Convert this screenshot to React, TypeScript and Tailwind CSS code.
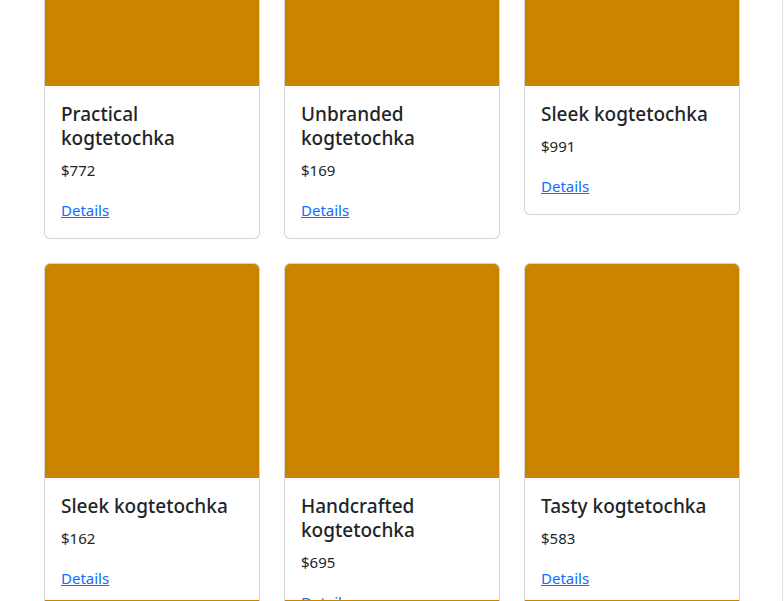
import React from "react";

type Item = { name: string; price: number };

const items: Item[] = [
  { name: "Practical kogtetochka", price: 772 },
  { name: "Unbranded kogtetochka", price: 169 },
  { name: "Sleek kogtetochka", price: 991 },
  { name: "Sleek kogtetochka", price: 162 },
  { name: "Handcrafted kogtetochka", price: 695 },
  { name: "Tasty kogtetochka", price: 583 },
];

function Card({ item }: { item: Item }) {
  return (
    <div className="flex flex-col self-start overflow-hidden rounded-[6px] border border-[rgba(0,0,0,0.175)] bg-white">
      <div className="h-[214px] w-full bg-[#cc8400]" />
      <div className="p-4">
        <h5 className="mb-2 text-[19px] font-medium leading-[24px] text-[#212529]">{item.name}</h5>
        <p className="mb-4 text-[15px] leading-[24px] text-[#212529]">${item.price}</p>
        <a href="#" className="text-[15px] leading-[24px] text-[#0d6efd] underline">
          Details
        </a>
      </div>
    </div>
  );
}

export default function App() {
  return (
    <div
      className="relative h-[601px] w-[784px] overflow-hidden bg-white"
      style={{ fontFamily: '"Noto Sans", "Open Sans", sans-serif' }}
    >
      <div className="ml-[44px] mt-[-129px] grid grid-cols-[216px_216px_216px] gap-x-[24px] gap-y-[24px]">
        {items.map((it, i) => (
          <Card key={i} item={it} />
        ))}
      </div>
      <div className="absolute bottom-0 left-[45px] grid h-px grid-cols-[214px_214px_214px] gap-x-[26px]">
        <div className="bg-[#cc8400]" />
        <div className="bg-[#cc8400]" />
        <div className="bg-[#cc8400]" />
      </div>
      <div className="absolute right-0 top-0 h-full w-[2px] border-l border-[#e6e6e6] bg-[#f7f7f7]" />
    </div>
  );
}
